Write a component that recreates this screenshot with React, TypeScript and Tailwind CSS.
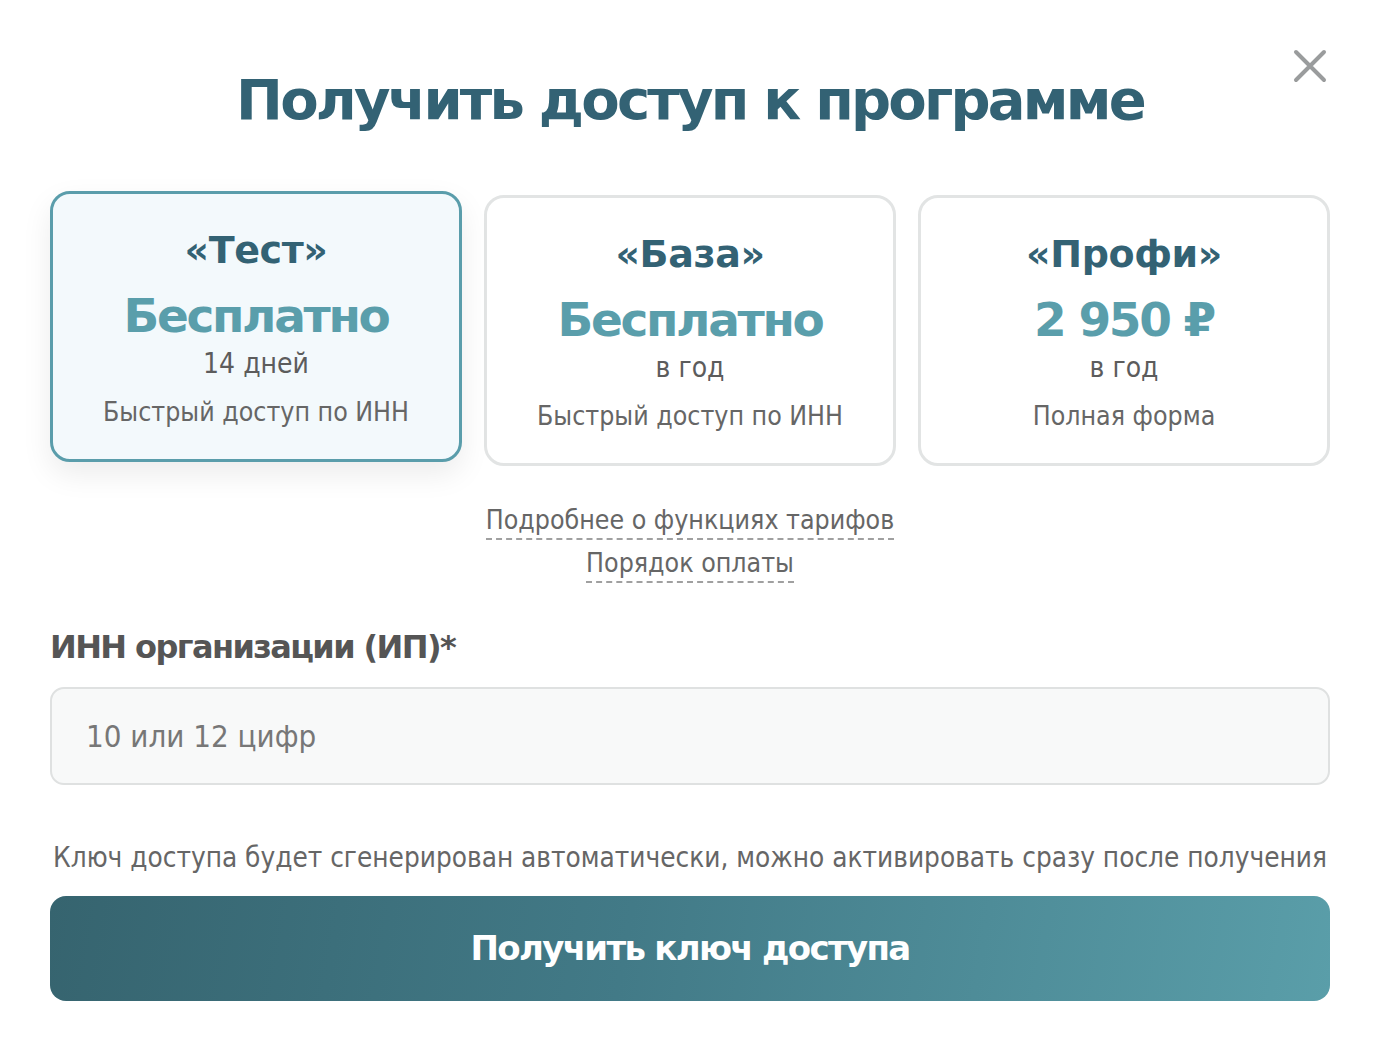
import { useState } from 'react';

type Plan = {
  id: string;
  name: string;
  price: string;
  term: string;
  note: string;
};

const plans: Plan[] = [
  { id: 'test', name: '«Тест»', price: 'Бесплатно', term: '14 дней', note: 'Быстрый доступ по ИНН' },
  { id: 'base', name: '«База»', price: 'Бесплатно', term: 'в год', note: 'Быстрый доступ по ИНН' },
  { id: 'pro', name: '«Профи»', price: '2 950 ₽', term: 'в год', note: 'Полная форма' },
];

const bold = "font-['DejaVu_Sans',sans-serif] font-bold tracking-[-0.05em]";
const regular = "font-['DejaVu_Sans_Condensed','DejaVu_Sans',sans-serif]";

function PlanCard({ plan, active, onClick }: { plan: Plan; active: boolean; onClick: () => void }) {
  return (
    <button
      type="button"
      onClick={onClick}
      className={
        active
          ? 'flex h-[271px] flex-col items-center justify-center rounded-[20px] border-[3px] border-[#5a9dab] bg-[#f3f9fc] pt-[6px] -translate-y-[4px] shadow-[0_12px_30px_rgba(0,0,0,0.08)]'
          : 'flex h-[271px] flex-col items-center justify-center rounded-[20px] border-[3px] border-[#e2e4e4] bg-white pt-[6px]'
      }
    >
      <div className="font-['DejaVu_Sans',sans-serif] text-[38px] font-bold leading-[44px] tracking-[-0.01em] text-[#336274]">
        {plan.name}
      </div>
      <div className={`${bold} mt-[16px] text-[47px] leading-[56px] text-[#5a9eab]`}>{plan.price}</div>
      <div className={`${regular} text-[28px] leading-[40px] text-[#5c5c5c]`}>{plan.term}</div>
      <div className={`${regular} mt-[8px] text-[26.5px] leading-[40px] text-[#666]`}>{plan.note}</div>
    </button>
  );
}

export default function App() {
  const [selected, setSelected] = useState('test');
  const [inn, setInn] = useState('');

  return (
    <main className="min-h-[1052px] w-full bg-white">
      <div className="relative flex flex-col pl-[50px] pr-[56px] pt-[66px]">
        <button type="button" className="absolute right-[58px] top-[48px] h-[36px] w-[36px]" aria-label="Закрыть">
          <svg viewBox="0 0 36 36" className="h-full w-full">
            <path d="M4 4 L32 32 M32 4 L4 32" stroke="#9a9c9d" strokeWidth="4" strokeLinecap="round" />
          </svg>
        </button>

        <h1 className={`${bold} text-center text-[56px] leading-[68px] text-[#336274]`}>
          Получить доступ к программе
        </h1>

        <div className="mt-[61px] grid grid-cols-3 gap-[22px]">
          {plans.map((plan) => (
            <PlanCard key={plan.id} plan={plan} active={selected === plan.id} onClick={() => setSelected(plan.id)} />
          ))}
        </div>

        <div className={`${regular} mt-[36px] flex flex-col items-center gap-[5px] text-[26.5px] leading-[36px] text-[#666]`}>
          <a className="border-b-2 border-dashed border-[#a0a0a0]">Подробнее о функциях тарифов</a>
          <a className="border-b-2 border-dashed border-[#a0a0a0]">Порядок оплаты</a>
        </div>

        <label className={`${bold} mt-[42px] text-[32px] leading-[44px] text-[#555]`}>ИНН организации (ИП)*</label>

        <input
          value={inn}
          onChange={(e) => setInn(e.target.value)}
          placeholder="10 или 12 цифр"
          className={`${regular} mt-[18px] h-[98px] w-full rounded-[14px] border-2 border-[#dfe1e1] bg-[#f8f9f9] px-[34px] text-[31px] text-[#333] outline-none placeholder:text-[#777]`}
        />

        <p className={`${regular} mt-[55px] text-center text-[27.7px] leading-[36px] text-[#666]`}>
          Ключ доступа будет сгенерирован автоматически, можно активировать сразу после получения
        </p>

        <button
          type="button"
          className={`${bold} mt-[20px] h-[105px] w-full rounded-[16px] bg-[linear-gradient(100deg,#36646f_0%,#427a87_45%,#5a9ea9_100%)] text-[34px] text-white`}
        >
          Получить ключ доступа
        </button>
      </div>
    </main>
  );
}
